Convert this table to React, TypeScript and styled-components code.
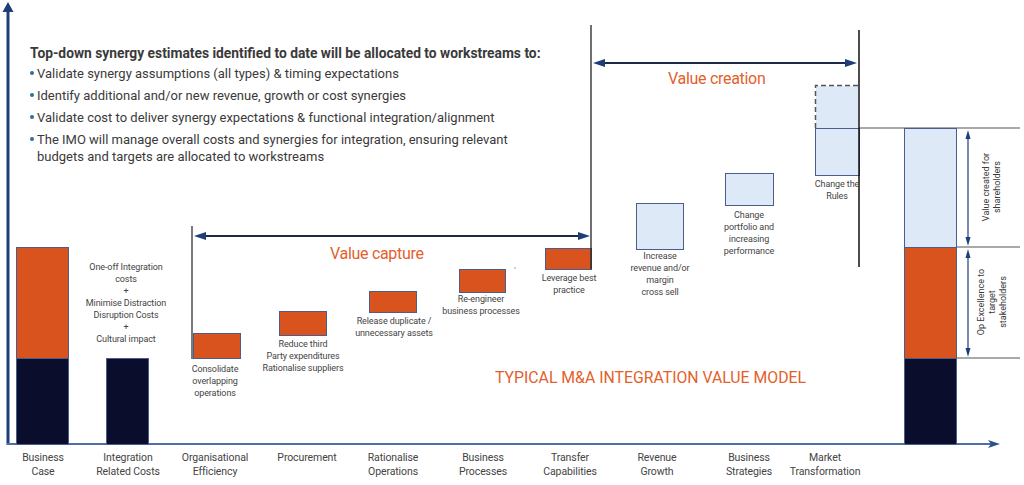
import styled, { createGlobalStyle } from "styled-components";

const GlobalStyle = createGlobalStyle`
  html, body {
    margin: 0;
    padding: 0;
    background: #fff;
  }
  body {
    font-family: Roboto, "Liberation Sans", sans-serif;
    color: #444;
  }
`;

const NAVY = "#0b0d2c";
const ORANGE = "#d9531f";
const LIGHT = "#dde9f6";
const EDGE = "#4a5d8c";
const AXIS = "#1f3e78";

type Bar = { x: number; y: number; w: number; h: number; fill: string };

const bars: Bar[] = [
  { x: 16, y: 247, w: 52, h: 111, fill: ORANGE },
  { x: 16, y: 358, w: 52, h: 86, fill: NAVY },
  { x: 106, y: 358, w: 42, h: 86, fill: NAVY },
  { x: 193, y: 333, w: 47, h: 25, fill: ORANGE },
  { x: 279, y: 311, w: 47, h: 24, fill: ORANGE },
  { x: 369, y: 291, w: 47, h: 21, fill: ORANGE },
  { x: 459, y: 269, w: 46, h: 23, fill: ORANGE },
  { x: 545, y: 248, w: 46, h: 21, fill: ORANGE },
  { x: 636, y: 203, w: 47, h: 46, fill: LIGHT },
  { x: 725, y: 173, w: 48, h: 32, fill: LIGHT },
  { x: 815, y: 128, w: 44, h: 47, fill: LIGHT },
  { x: 904, y: 128, w: 52, h: 119, fill: LIGHT },
  { x: 904, y: 247, w: 52, h: 111, fill: ORANGE },
  { x: 904, y: 358, w: 52, h: 86, fill: NAVY },
];

type Note = { x: number; y: number; lines: string[] };

const notes: Note[] = [
  {
    x: 126,
    y: 261,
    lines: [
      "One-off Integration",
      "costs",
      "+",
      "Minimise Distraction",
      "Disruption Costs",
      "+",
      "Cultural impact",
    ],
  },
  { x: 215, y: 363, lines: ["Consolidate", "overlapping", "operations"] },
  {
    x: 303,
    y: 338,
    lines: ["Reduce third", "Party expenditures", "Rationalise suppliers"],
  },
  { x: 394, y: 315, lines: ["Release duplicate /", "unnecessary assets"] },
  { x: 481, y: 293, lines: ["Re-engineer", "business processes"] },
  { x: 569, y: 272, lines: ["Leverage best", "practice"] },
  {
    x: 660,
    y: 250,
    lines: ["Increase", "revenue and/or", "margin", "cross sell"],
  },
  {
    x: 749,
    y: 209,
    lines: ["Change", "portfolio and", "increasing", "performance"],
  },
  { x: 837, y: 178, lines: ["Change the", "Rules"] },
];

const categories: Note[] = [
  { x: 43, y: 451, lines: ["Business", "Case"] },
  { x: 128, y: 451, lines: ["Integration", "Related Costs"] },
  { x: 215, y: 451, lines: ["Organisational", "Efficiency"] },
  { x: 307, y: 451, lines: ["Procurement"] },
  { x: 393, y: 451, lines: ["Rationalise", "Operations"] },
  { x: 483, y: 451, lines: ["Business", "Processes"] },
  { x: 570, y: 451, lines: ["Transfer", "Capabilities"] },
  { x: 657, y: 451, lines: ["Revenue", "Growth"] },
  { x: 749, y: 451, lines: ["Business", "Strategies"] },
  { x: 825, y: 451, lines: ["Market", "Transformation"] },
];

const bullets = [
  "Validate synergy assumptions (all types) & timing expectations",
  "Identify additional and/or new revenue, growth or cost synergies",
  "Validate cost to deliver synergy expectations & functional integration/alignment",
  "The IMO will manage overall costs and synergies for integration, ensuring relevant budgets and targets are allocated to workstreams",
];

const Canvas = styled.div`
  position: relative;
  width: 1024px;
  height: 485px;
  overflow: hidden;
  background: #fff;
`;

const Drawing = styled.svg`
  position: absolute;
  inset: 0;
`;

const Header = styled.div`
  position: relative;
  padding: 44px 0 0 30px;
  width: 500px;
`;

const Lead = styled.div`
  font-size: 13.8px;
  font-weight: 700;
  color: #3a3a3a;
  line-height: 18px;
  white-space: nowrap;
`;

const List = styled.ul`
  list-style: none;
  margin: 3px 0 0;
  padding: 0;
  display: flex;
  flex-direction: column;
  gap: 5px;
`;

const Item = styled.li`
  position: relative;
  padding-left: 7px;
  font-size: 13px;
  color: #3a3a3a;
  line-height: 17px;

  &::before {
    content: "";
    position: absolute;
    left: 0;
    top: 6px;
    width: 4px;
    height: 4px;
    border-radius: 50%;
    background: #2b6f99;
  }
`;

const Caption = styled.div<{ $x: number; $y: number; $size: number }>`
  position: absolute;
  left: ${(p) => p.$x}px;
  top: ${(p) => p.$y}px;
  transform: translateX(-50%);
  text-align: center;
  white-space: nowrap;
  font-size: ${(p) => p.$size}px;
  line-height: ${(p) => Math.round(p.$size * 1.3)}px;
  letter-spacing: -0.1px;
  color: #444;
`;

const Title = styled.div<{ $x: number; $y: number; $size: number }>`
  position: absolute;
  left: ${(p) => p.$x}px;
  top: ${(p) => p.$y}px;
  font-size: ${(p) => p.$size}px;
  line-height: 1;
  color: #e35f2b;
  white-space: nowrap;
  letter-spacing: -0.3px;
`;

const Banner = styled(Title)`
  letter-spacing: 0;
`;

const Side = styled.div<{ $x: number; $y: number }>`
  position: absolute;
  left: ${(p) => p.$x}px;
  top: ${(p) => p.$y}px;
  transform: translate(-50%, -50%) rotate(-90deg);
  text-align: center;
  white-space: nowrap;
  font-size: 9px;
  line-height: 11px;
  color: #3a3a3a;
`;

const ArrowH = ({ x1, x2, y }: { x1: number; x2: number; y: number }) => (
  <g>
    <line x1={x1 + 6} y1={y} x2={x2 - 6} y2={y} stroke="#1c2a48" strokeWidth={2} />
    <polygon points={`${x1},${y} ${x1 + 12},${y - 4} ${x1 + 12},${y + 4}`} fill="#1f3e78" />
    <polygon points={`${x2},${y} ${x2 - 12},${y - 4} ${x2 - 12},${y + 4}`} fill="#1f3e78" />
  </g>
);

const ArrowV = ({ x, y1, y2 }: { x: number; y1: number; y2: number }) => (
  <g>
    <line x1={x} y1={y1 + 6} x2={x} y2={y2 - 6} stroke={AXIS} strokeWidth={1.2} />
    <polygon points={`${x},${y1} ${x - 2.5},${y1 + 9} ${x + 2.5},${y1 + 9}`} fill={AXIS} />
    <polygon points={`${x},${y2} ${x - 2.5},${y2 - 9} ${x + 2.5},${y2 - 9}`} fill={AXIS} />
  </g>
);

const Chart = () => (
  <Drawing width={1024} height={485} viewBox="0 0 1024 485">
    {/* axes */}
    <line x1={8} y1={445} x2={8} y2={10} stroke={AXIS} strokeWidth={3} />
    <polygon points="8,2 2.5,12 13.5,12" fill={AXIS} />
    <line x1={7} y1={444} x2={992} y2={444} stroke="#4d6fa3" strokeWidth={2} />
    <polygon points="1000,444 988,440 991,444 988,448" fill="#2d4f8a" />

    {/* reference lines */}
    <line x1={859} y1={128} x2={1020} y2={128} stroke="#555" strokeWidth={1} />
    <line x1={956} y1={247} x2={1020} y2={247} stroke="#555" strokeWidth={1} />
    <line x1={956} y1={358} x2={1020} y2={358} stroke="#555" strokeWidth={1} />

    {bars.map((b, i) => (
      <rect
        key={i}
        x={b.x + 0.5}
        y={b.y + 0.5}
        width={b.w}
        height={b.h}
        fill={b.fill}
        stroke={EDGE}
        strokeWidth={1}
      />
    ))}

    {/* speculative upside */}
    <rect x={816} y={86} width={42} height={42} fill={LIGHT} />
    <path d="M815.5 128 V85.5 H859" fill="none" stroke="#555" strokeWidth={1.5} strokeDasharray="5 3" />
    <line x1={815} y1={128.5} x2={859} y2={128.5} stroke={EDGE} strokeWidth={1} />

    {/* phase boundaries */}
    <line x1={192} y1={226} x2={192} y2={359} stroke="#333" strokeWidth={1.3} />
    <line x1={591} y1={25} x2={591} y2={269} stroke="#222" strokeWidth={1.3} />
    <line x1={859} y1={30} x2={859} y2={267} stroke="#111" strokeWidth={1.5} />

    <ArrowH x1={194} x2={590} y={236} />
    <ArrowH x1={593} x2={857} y={63} />

    <ArrowV x={968} y1={130} y2={246} />
    <ArrowV x={968} y1={249} y2={357} />

    <circle cx={515} cy={268} r={0.8} fill="#999" />
  </Drawing>
);

export default function App() {
  return (
    <>
      <GlobalStyle />
      <Canvas>
        <Chart />
        <Header>
          <Lead>
            Top-down synergy estimates identified to date will be allocated to
            workstreams to:
          </Lead>
          <List>
            {bullets.map((b) => (
              <Item key={b}>{b}</Item>
            ))}
          </List>
        </Header>

        {notes.map((n) => (
          <Caption key={n.lines[0] + n.x} $x={n.x} $y={n.y} $size={9}>
            {n.lines.map((l, i) => (
              <div key={i}>{l}</div>
            ))}
          </Caption>
        ))}

        {categories.map((c) => (
          <Caption key={c.lines[0] + c.x} $x={c.x} $y={c.y} $size={10.5}>
            {c.lines.map((l, i) => (
              <div key={i}>{l}</div>
            ))}
          </Caption>
        ))}

        <Title $x={330} $y={246} $size={16}>
          Value capture
        </Title>
        <Title $x={668} $y={71} $size={16}>
          Value creation
        </Title>
        <Banner $x={495} $y={370} $size={15.8}>
          TYPICAL M&amp;A INTEGRATION VALUE MODEL
        </Banner>

        <Side $x={992} $y={187}>
          Value created for
          <br />
          shareholders
        </Side>
        <Side $x={992} $y={302}>
          Op Excellence to
          <br />
          target
          <br />
          stakeholders
        </Side>
      </Canvas>
    </>
  );
}
